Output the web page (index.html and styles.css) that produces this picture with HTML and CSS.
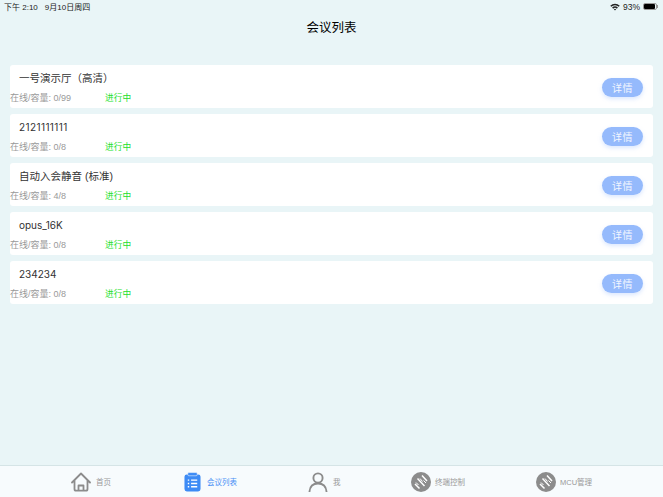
FILE: index.html
```html
<!DOCTYPE html>
<html lang="zh">
<head>
<meta charset="utf-8">
<title>会议列表</title>
<link rel="stylesheet" href="styles.css">
</head>
<body>
<div class="app">
  <div class="status">
    <span class="status-time">下午 2:10<span class="status-date">9月10日周四</span></span>
    <span class="status-right">
      <svg class="wifi" viewBox="0 0 12 9" width="10" height="8"><path d="M0.3 3 A8 8 0 0 1 11.7 3 L10.4 4.3 A6.2 6.2 0 0 0 1.6 4.3 Z M2.5 5.2 A5 5 0 0 1 9.5 5.2 L8.2 6.5 A3.2 3.2 0 0 0 3.8 6.5 Z M4.6 7.3 A2 2 0 0 1 7.4 7.3 L6 8.8 Z" fill="#222"/></svg>
      <span class="pct">93%</span>
      <span class="battery"><span class="battery-fill"></span></span><span class="battery-tip"></span>
    </span>
  </div>
  <h1 class="title">会议列表</h1>
  <main class="list">
    <div class="card">
      <div class="info"><div class="name">一号演示厅（高清）</div><div class="meta"><span class="cap">在线/容量: 0/99</span><span class="state">进行中</span></div></div>
      <button class="detail">详情</button>
    </div>
    <div class="card">
      <div class="info"><div class="name name-latin name-digits">2121111111</div><div class="meta"><span class="cap">在线/容量: 0/8</span><span class="state">进行中</span></div></div>
      <button class="detail">详情</button>
    </div>
    <div class="card">
      <div class="info"><div class="name">自动入会静音 (标准)</div><div class="meta"><span class="cap">在线/容量: 4/8</span><span class="state">进行中</span></div></div>
      <button class="detail">详情</button>
    </div>
    <div class="card">
      <div class="info"><div class="name name-latin">opus_16K</div><div class="meta"><span class="cap">在线/容量: 0/8</span><span class="state">进行中</span></div></div>
      <button class="detail">详情</button>
    </div>
    <div class="card">
      <div class="info"><div class="name name-latin">234234</div><div class="meta"><span class="cap">在线/容量: 0/8</span><span class="state">进行中</span></div></div>
      <button class="detail">详情</button>
    </div>
  </main>
  <nav class="tabs">
    <div class="tab tab-home">
      <svg viewBox="0 0 20 20" width="20" height="20"><path d="M1 10.5 L10 1.5 L19 10.5 M3.5 8 V17 Q3.5 18.7 5 18.7 H15 Q16.5 18.7 16.5 17 V8 M7.5 18.7 V13.5 H12.5 V18.7" fill="none" stroke="#8c8c8c" stroke-width="1.8" stroke-linejoin="round" stroke-linecap="round"/></svg>
      <span>首页</span>
    </div>
    <div class="tab tab-list active">
      <svg viewBox="0 0 18 20" width="17" height="20"><rect x="0.5" y="2" width="17" height="18" rx="2.5" fill="#3d8bf5"/><rect x="4" y="0" width="10" height="3.4" rx="1.2" fill="#3d8bf5" stroke="#f5fafc" stroke-width=".6"/><path d="M4 8H5.5M7.5 8H14M4 11.5H5.5M7.5 11.5H14M4 15H5.5M7.5 15H14" stroke="#fff" stroke-width="1.5"/></svg>
      <span>会议列表</span>
    </div>
    <div class="tab tab-me">
      <svg viewBox="0 0 20 20" width="20" height="20"><circle cx="10" cy="6" r="4.6" fill="none" stroke="#8c8c8c" stroke-width="1.9"/><path d="M1.5 19.5 C2 14 5.5 11.5 10 11.5 C14.5 11.5 18 14 18.5 19.5" fill="none" stroke="#8c8c8c" stroke-width="1.9" stroke-linecap="round"/></svg>
      <span>我</span>
    </div>
    <div class="tab tab-term">
      <svg viewBox="0 0 20 20" width="20" height="20"><circle cx="10" cy="10" r="10" fill="#8c8c8c"/><path d="M4 12L8.5 16.5M6.5 6.5L13.5 14M11 3.5L16 9" stroke="#fff" stroke-width="1.5" fill="none"/><path d="M5 10.5L7.5 13M9 6.5L11.5 9.5M12.5 8.5L15 11" stroke="#fff" stroke-width="1" fill="none"/></svg>
      <span>终端控制</span>
    </div>
    <div class="tab tab-mcu">
      <svg viewBox="0 0 20 20" width="20" height="20"><circle cx="10" cy="10" r="10" fill="#8c8c8c"/><path d="M4 12L8.5 16.5M6.5 6.5L13.5 14M11 3.5L16 9" stroke="#fff" stroke-width="1.5" fill="none"/><path d="M5 10.5L7.5 13M9 6.5L11.5 9.5M12.5 8.5L15 11" stroke="#fff" stroke-width="1" fill="none"/></svg>
      <span>MCU管理</span>
    </div>
  </nav>
</div>
</body>
</html>
```
FILE: styles.css
```css
* { box-sizing: border-box; }
html, body { margin: 0; height: 100%; }
body {
  font-family: "Liberation Sans", "Noto Sans CJK SC", sans-serif;
  background: #e9f5f7;
  overflow: hidden;
}
.app {
  width: 663px;
  height: 497px;
  display: flex;
  flex-direction: column;
}
.status {
  height: 13px;
  padding: 0 5px 0 4px;
  display: flex;
  justify-content: space-between;
  align-items: center;
  font-size: 8px;
  color: #222;
  flex: none;
}
.status-date { margin-left: 7px; }
.status-right { display: flex; align-items: center; }
.pct { margin: 0 3px 0 3px; font-size: 8.5px; }
.battery {
  width: 14px;
  height: 7px;
  border: 1px solid #999;
  border-radius: 2px;
  display: block;
}
.battery-fill { display: block; width: 90%; height: 100%; background: #000; border-radius: 1px; }
.battery-tip { width: 1px; height: 3px; background: #999; }
.title {
  margin: 0;
  padding-top: 8px;
  height: 52px;
  text-align: center;
  font-size: 12.5px;
  line-height: 15px;
  font-weight: 400;
  color: #000;
  flex: none;
}
.list {
  flex: 1;
  padding: 0 10px;
  display: flex;
  flex-direction: column;
  gap: 6px;
}
.card {
  height: 43px;
  background: #fff;
  border-radius: 3px;
  display: flex;
  align-items: center;
  justify-content: space-between;
  padding-right: 10px;
  flex: none;
}
.info { flex: 1; }
.name {
  font-size: 10.5px;
  line-height: 14px;
  color: #333;
  padding: 4px 0 0 9px;
  height: 25px;
}
.name-latin { font-family: "Inter", sans-serif; font-size: 10px; }
.name-digits { letter-spacing: .4px; }
.meta { display: flex; font-size: 9px; line-height: 12px; height: 15px; }
.cap { width: 95px; color: #999; }
.state { color: #22e02c; font-size: 8.7px; }
.detail {
  width: 41px;
  height: 19px;
  margin-top: 2px;
  border: none;
  border-radius: 10px;
  background: #95bafc;
  color: #f2f6ff;
  font: inherit;
  font-size: 10px;
  letter-spacing: .5px;
  padding: 0;
  box-shadow: 0 2px 4px rgba(149, 186, 252, .35);
}
.tabs {
  height: 32px;
  background: #f7fbfd;
  border-top: 1px solid #d5e4e6;
  display: flex;
  align-items: center;
  flex: none;
  padding-left: 71px;
}
.tab { display: flex; align-items: center; gap: 5px; font-size: 7.5px; color: #999; flex: none; }
.tab-home { width: 113px; }
.tab-list { width: 124px; }
.tab-me { width: 103px; }
.tab-term { width: 125px; }
.tab.active { color: #4a90f5; gap: 6px; }
.tab-mcu span, .tab-term span { margin-left: -1px; }
```
